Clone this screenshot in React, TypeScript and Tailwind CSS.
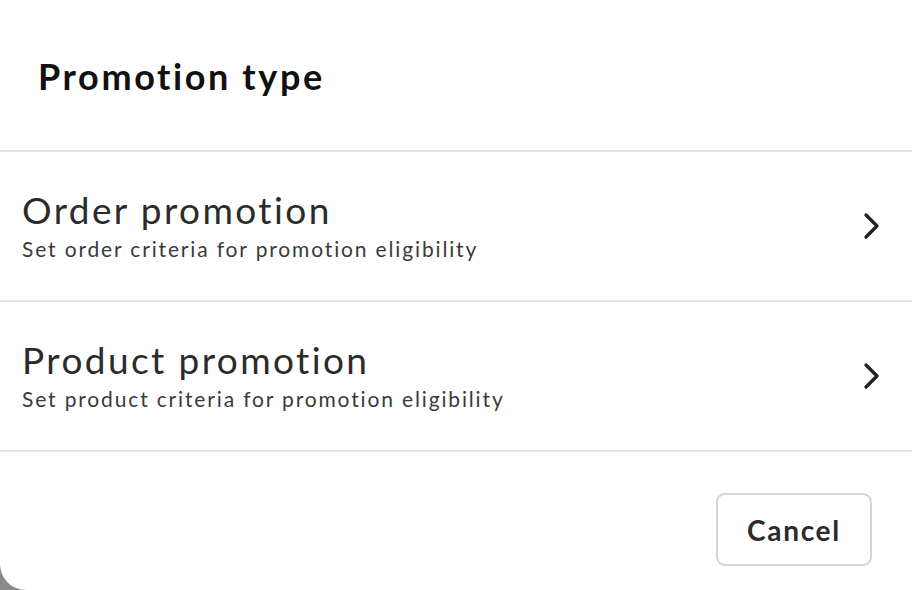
const options = [
  { title: 'Order promotion', desc: 'Set order criteria for promotion eligibility' },
  { title: 'Product promotion', desc: 'Set product criteria for promotion eligibility' },
]

function Chevron() {
  return (
    <svg width="18" height="28" viewBox="0 0 18 28" fill="none" className="text-[#222]">
      <path d="M3 3 L14 14 L3 25" stroke="currentColor" strokeWidth="3.4" strokeLinecap="round" strokeLinejoin="round" />
    </svg>
  )
}

export default function App() {
  return (
    <div
      className="w-[912px] h-[590px] bg-[#8a8a8a] overflow-hidden"
      style={{ fontFamily: 'Lato, "Noto Sans", sans-serif', fontVariantLigatures: 'none' }}
    >
      <div className="h-full bg-white rounded-bl-[26px] flex flex-col">
        <div className="h-[152px] flex items-center px-[38px] border-b-2 border-[#e2e2e2]">
          <h1 className="text-[36px] font-bold text-[#111] tracking-[2.6px] pt-[2px]">Promotion type</h1>
        </div>
        {options.map(o => (
          <div key={o.title} className="h-[150px] flex items-center justify-between pl-[22px] pr-[31px] border-b-2 border-[#e2e2e2]">
            <div className="flex flex-col -mt-[1px]">
              <span className="text-[37px] leading-[42px] text-[#2b2b2b] tracking-[2.4px]">{o.title}</span>
              <span className="text-[21px] leading-[26px] mt-[5px] text-[#3a3a3a] tracking-[1.85px]">{o.desc}</span>
            </div>
            <Chevron />
          </div>
        ))}
        <div className="flex justify-end pt-[41px] pr-[40px]">
          <button className="w-[156px] h-[73px] rounded-[9px] border-2 border-[#d4d4d4] text-[28px] font-bold text-[#2b2b2b] bg-white tracking-[1.7px]">
            Cancel
          </button>
        </div>
      </div>
    </div>
  )
}
